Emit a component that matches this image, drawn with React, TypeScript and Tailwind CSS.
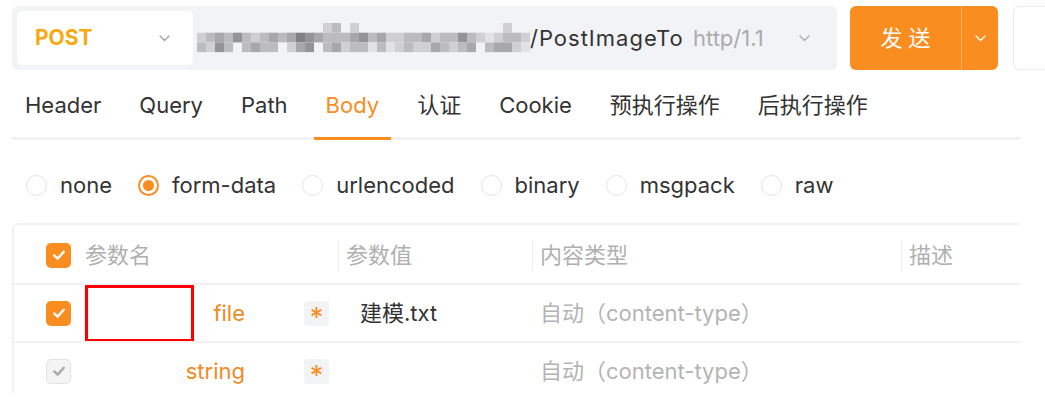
import { ReactNode } from "react";

const mosaicRows = [
  "00000000000000230200000000000000002000",
  "23435323434654333453422334233532123320",
  "32530343302450342331312322432340344210",
];

const shades = ["transparent", "#e2e2e4", "#d0d0d3", "#bcbcbf", "#a8a8ab", "#949498", "#818185"];

const Chevron = ({ color = "#9a9a9a" }: { color?: string }) => (
  <svg width="11" height="7" viewBox="0 0 11 7" fill="none">
    <polyline points="1,1 5.5,5.5 10,1" stroke={color} strokeWidth="1.3" strokeLinecap="round" strokeLinejoin="round" />
  </svg>
);

const Check = ({ color }: { color: string }) => (
  <svg width="16" height="16" viewBox="0 0 16 16" fill="none">
    <polyline points="3.2,8.4 6.6,11.6 12.8,4.8" stroke={color} strokeWidth="2.4" strokeLinecap="round" strokeLinejoin="round" />
  </svg>
);

function Checkbox({ disabled }: { disabled?: boolean }) {
  if (disabled) {
    return (
      <div className="flex h-[25px] w-[25px] shrink-0 items-center justify-center rounded-[5px] border border-[#e3e3e3] bg-[#f4f4f5]">
        <Check color="#a9a9a9" />
      </div>
    );
  }
  return (
    <div className="flex h-[25px] w-[25px] shrink-0 items-center justify-center rounded-[5px] bg-[#f98d1f]">
      <Check color="#ffffff" />
    </div>
  );
}

function Radio({ label, checked }: { label: string; checked?: boolean }) {
  return (
    <div className="flex items-center gap-[13px]">
      {checked ? (
        <div className="flex h-[21px] w-[21px] items-center justify-center rounded-full border-2 border-[#f98d1f]">
          <div className="h-[11px] w-[11px] rounded-full bg-[#f98d1f]" />
        </div>
      ) : (
        <div className="h-[21px] w-[21px] rounded-full border border-[#e4e4e6]" />
      )}
      <span className="text-[#333]">{label}</span>
    </div>
  );
}

function Star() {
  return (
    <div className="ml-[59px] flex h-[25px] w-[25px] shrink-0 items-center justify-center rounded-[3px] bg-[#f2f3f5] pt-[8px] text-[27px] leading-none text-[#f98d1f]">
      *
    </div>
  );
}

function Row({ type, value, children, disabled }: { type: string; value?: string; children?: ReactNode; disabled?: boolean }) {
  return (
    <div className="relative flex h-[58px] shrink-0 items-center border-t-2 border-[#f2f2f4]">
      <div className="flex w-[324px] items-center pl-[32px] pr-[9px]">
        <Checkbox disabled={disabled} />
        <div className="flex-1 text-right text-[#f08a24]">{type}</div>
        <Star />
      </div>
      <div className="w-[194px] pl-[22px] text-[#333]">{value}</div>
      <div className="w-[369px] pl-[8px] text-[#b4b4b4]">自动（content-type）</div>
      <div className="flex-1" />
      {children}
    </div>
  );
}

export default function App() {
  const tabs = ["Header", "Query", "Path", "Body", "认证", "Cookie", "预执行操作", "后执行操作"];

  return (
    <div className="h-[411px] w-[1045px] overflow-hidden bg-white font-['Inter','Noto_Sans_CJK_SC',sans-serif] text-[22px]">
      {/* request line */}
      <div className="flex h-[70px] items-stretch pt-[6px]">
        <div className="ml-[12px] flex w-[825px] shrink-0 items-center rounded-[6px] bg-[#f2f3f7] p-[5px]">
          <div className="flex h-full w-[176px] shrink-0 items-center justify-between rounded-[5px] bg-white pl-[18px] pr-[23px]">
            <span className="text-[21px] font-bold text-[#f7aa14]">POST</span>
            <Chevron color="#a0a0a0" />
          </div>
          <svg width="333" height="30" className="ml-[4px] shrink-0">
            {mosaicRows.map((row, r) =>
              row.split("").map((c, i) => (
                <rect key={`${r}-${i}`} x={i * 9} y={r * 9.7} width="9" height="9.7" fill={shades[Number(c)]} />
              ))
            )}
          </svg>
          <div className="w-[157px] shrink-0 overflow-hidden whitespace-nowrap tracking-[1px] text-[#333]">/PostImageTo</div>
          <div className="ml-[6px] flex flex-1 items-center justify-between pr-[22px] text-[#ababab]">
            <span>http/1.1</span>
            <Chevron color="#a8a8a8" />
          </div>
        </div>
        <div className="ml-[13px] flex w-[148px] shrink-0 rounded-[6px] bg-[#f98d1f]">
          <div className="flex w-[111px] items-center justify-center pl-[6px] tracking-[6px] text-white">发送</div>
          <div className="w-px bg-[#fbae63]" />
          <div className="flex flex-1 items-center justify-center">
            <Chevron color="#ffffff" />
          </div>
        </div>
        <div className="ml-[15px] w-[32px] shrink-0 rounded-l-[6px] border border-r-0 border-[#ececee] bg-white" />
      </div>

      {/* tabs */}
      <div className="ml-[12px] flex h-[70px] w-[1008px] border-b-[3px] border-[#f2f2f4]">
        {tabs.map((t, i) => (
          <div
            key={t}
            className={
              "-mb-[3px] flex items-center border-b-[3px] px-[12px] pt-[3px] " +
              (i > 0 ? "ml-[14px] " : "ml-[1px] ") +
              (t === "Body" ? "border-[#f98d1f] text-[#f98d1f]" : "border-transparent text-[#333]")
            }
          >
            {t}
          </div>
        ))}
      </div>

      {/* body type */}
      <div className="flex h-[83px] items-center gap-[26px] pl-[26px] pt-[7px]">
        <Radio label="none" />
        <Radio label="form-data" checked />
        <Radio label="urlencoded" />
        <Radio label="binary" />
        <Radio label="msgpack" />
        <Radio label="raw" />
      </div>

      {/* params table */}
      <div className="ml-[12px] flex h-[170px] w-[1008px] flex-col overflow-hidden rounded-tl-[6px] border-l-2 border-t-2 border-[#f2f2f4]">
        <div className="flex h-[58px] shrink-0 items-center pt-[2px] text-[#b0b0b0]">
          <div className="flex w-[324px] items-center gap-[14px] pl-[32px]">
            <Checkbox />
            <span>参数名</span>
          </div>
          <div className="flex h-[31px] w-[194px] items-center border-l border-[#ededee] pl-[7px]">参数值</div>
          <div className="flex h-[31px] w-[369px] items-center border-l border-[#ededee] pl-[7px]">内容类型</div>
          <div className="flex h-[31px] flex-1 items-center border-l border-[#ededee] pl-[7px]">描述</div>
        </div>
        <Row type="file" value="建模.txt">
          <div className="absolute left-[71px] top-0 h-[57px] w-[109px] border-[3px] border-[#ff0000]" />
        </Row>
        <Row type="string" disabled />
      </div>
    </div>
  );
}
